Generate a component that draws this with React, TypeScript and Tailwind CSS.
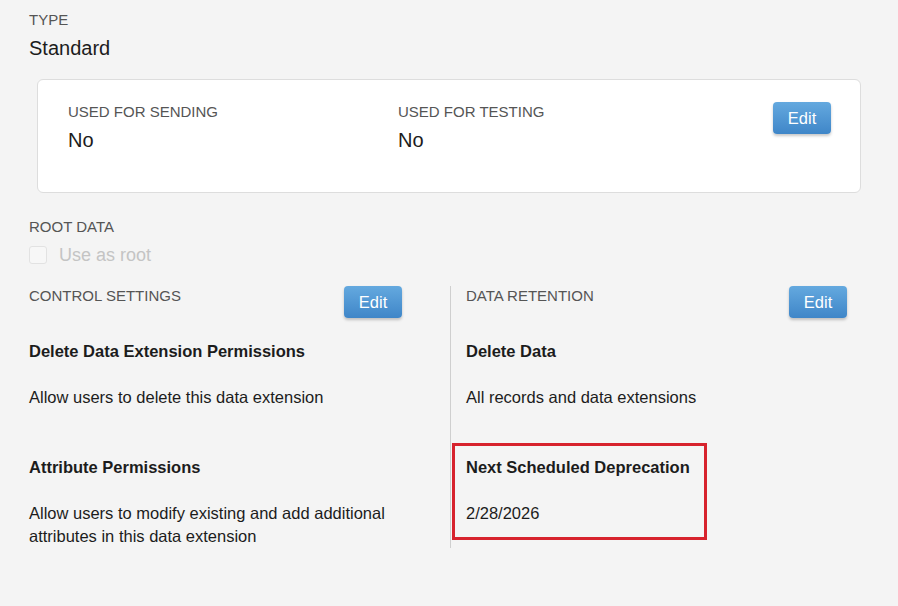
import React from "react";

function EditButton() {
  return (
    <button
      type="button"
      className="h-[32px] w-[58px] shrink-0 rounded-[4px] bg-gradient-to-b from-[#64a9df] to-[#3f86c8] text-[16.5px] leading-none text-white shadow-[0_2px_3px_rgba(0,0,0,0.22)]"
    >
      Edit
    </button>
  );
}

function Label({ children }: { children: React.ReactNode }) {
  return (
    <div className="text-[15px] leading-[18px] uppercase text-[#555555]">
      {children}
    </div>
  );
}

function Setting({
  title,
  children,
  highlight,
}: {
  title: string;
  children: React.ReactNode;
  highlight?: boolean;
}) {
  return (
    <div className="relative">
      {highlight && (
        <div className="pointer-events-none absolute -left-[14px] -top-[13px] h-[97px] w-[255px] border-[3px] border-[#d7232d]" />
      )}
      <div className="text-[16.5px] leading-[23px] font-bold text-[#1c1c1c]">
        {title}
      </div>
      <div className="mt-[23px] text-[16.5px] leading-[23px] text-[#1c1c1c]">
        {children}
      </div>
    </div>
  );
}

export default function App() {
  return (
    <div className="min-h-screen w-full bg-[#f4f4f4] px-[29px] pt-[11px] font-['Liberation_Sans',Arial,sans-serif]">
      <Label>Type</Label>
      <div className="mt-[7px] text-[20px] leading-[24px] text-[#1c1c1c]">
        Standard
      </div>

      <div className="mx-[8px] mt-[19px] flex h-[114px] rounded-[6px] border border-[#dddddd] bg-white pl-[30px] pr-[29px] pt-[22px]">
        <div className="w-[330px] pt-[1px]">
          <Label>Used for sending</Label>
          <div className="mt-[7px] text-[20px] leading-[24px] text-[#1c1c1c]">
            No
          </div>
        </div>
        <div className="flex-1 pt-[1px]">
          <Label>Used for testing</Label>
          <div className="mt-[7px] text-[20px] leading-[24px] text-[#1c1c1c]">
            No
          </div>
        </div>
        <EditButton />
      </div>

      <div className="mt-[25px]">
        <Label>Root data</Label>
        <label className="mt-[10px] flex items-center gap-[12px]">
          <span className="h-[18px] w-[18px] rounded-[3px] border border-[#e2e2e2] bg-[#f7f7f7]" />
          <span className="text-[18px] leading-[18px] text-[#c4c4c4]">
            Use as root
          </span>
        </label>
      </div>

      <div className="mt-[22px] flex">
        <div className="w-[421px] pr-[48px]">
          <div className="flex items-start justify-between">
            <div className="pt-[1px]">
              <Label>Control settings</Label>
            </div>
            <EditButton />
          </div>
          <div className="mt-[22px]">
            <Setting title="Delete Data Extension Permissions">
              Allow users to delete this data extension
            </Setting>
          </div>
          <div className="mt-[47px]">
            <Setting title="Attribute Permissions">
              Allow users to modify existing and add additional
              <br />
              attributes in this data extension
            </Setting>
          </div>
        </div>

        <div className="flex-1 border-l border-[#cfcfcf] pl-[15px] pr-[22px]">
          <div className="flex items-start justify-between">
            <div className="pt-[1px]">
              <Label>Data retention</Label>
            </div>
            <EditButton />
          </div>
          <div className="mt-[22px]">
            <Setting title="Delete Data">All records and data extensions</Setting>
          </div>
          <div className="mt-[47px]">
            <Setting title="Next Scheduled Deprecation" highlight>
              2/28/2026
            </Setting>
          </div>
        </div>
      </div>
    </div>
  );
}
